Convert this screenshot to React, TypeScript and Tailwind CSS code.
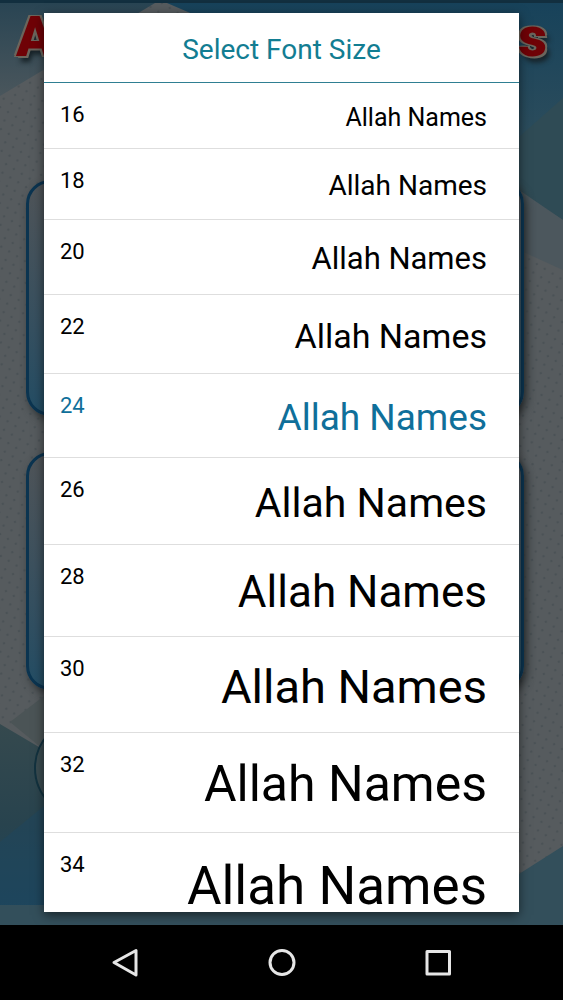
import { useState } from "react";
import clsx from "clsx";

interface FontOption {
  size: number;
  sample: string;
}

// sample = text size + line height of the preview on the right
const OPTIONS: FontOption[] = [
  { size: 16, sample: "text-[25px] leading-[33px]" },
  { size: 18, sample: "text-[28px] leading-[38px]" },
  { size: 20, sample: "text-[31px] leading-[42px]" },
  { size: 22, sample: "text-[34px] leading-[46px]" },
  { size: 24, sample: "text-[37px] leading-[51px]" },
  { size: 26, sample: "text-[41px] leading-[54px]" },
  { size: 28, sample: "text-[44px] leading-[59px]" },
  { size: 30, sample: "text-[47px] leading-[63px]" },
  { size: 32, sample: "text-[50px] leading-[67px]" },
  { size: 34, sample: "text-[53px] leading-[70px]" },
];

function Backdrop() {
  return (
    <div className="absolute inset-0 overflow-hidden bg-[#565b5e]" aria-hidden="true">
      <svg className="absolute inset-0 h-full w-full" viewBox="0 0 563 925" preserveAspectRatio="none">
        <defs>
          <linearGradient id="sky" x1="0" y1="0" x2="0" y2="1">
            <stop offset="0" stopColor="#17425a" />
            <stop offset="0.6" stopColor="#2b4c5c" />
            <stop offset="1" stopColor="#324d57" />
          </linearGradient>
          <linearGradient id="corner" x1="0" y1="0" x2="0" y2="1">
            <stop offset="0" stopColor="#35494e" />
            <stop offset="0.5" stopColor="#28434e" />
            <stop offset="1" stopColor="#1b465f" />
          </linearGradient>
          <linearGradient id="fade" x1="0" y1="0" x2="0" y2="1">
            <stop offset="0" stopColor="#284453" />
            <stop offset="1" stopColor="#4a565c" />
          </linearGradient>
          <pattern id="dots" width="12" height="14" patternUnits="userSpaceOnUse" patternTransform="rotate(-18)">
            <circle cx="3" cy="4" r="1.3" fill="#4b5256" />
            <circle cx="9" cy="11" r="1.3" fill="#4b5256" />
          </pattern>
        </defs>
        <rect width="563" height="925" fill="url(#dots)" />
        <path d="M0 0H160L0 96Z" fill="url(#fade)" />
        <path d="M160 0H563V220L519 192L300 60Z" fill="url(#sky)" />
        <path d="M519 137L563 98V220L519 192Z" fill="#2f4b55" />
        <path d="M519 190L563 220V270L519 250Z" fill="#4c575d" />
        <path d="M10 722L44 696V750Z" fill="#4b5456" />
        <path d="M0 724L44 750V925H0Z" fill="url(#corner)" />
        <path d="M0 842L44 806V925H0Z" fill="#1d465d" opacity="0.5" />
        <path d="M0 925V905H519V874L563 846V925Z" fill="#334f5b" />
        <rect width="563" height="3" fill="#122f3f" />
      </svg>
      <div className="relative flex h-[180px] justify-between px-4 pt-1 font-['Roboto',sans-serif] text-[56px] leading-[66px] font-black text-[#6f0206] [text-shadow:-2px_-1px_0_#6b655c,2px_-1px_0_#6b655c,-2px_1px_0_#6b655c,2px_2px_0_#6b655c,4px_6px_5px_#172227]">
        <span>A</span>
        <span>s</span>
      </div>
      <div className="relative flex flex-col gap-9 pr-[39px] pl-[26px]">
        <div className="h-[236px] rounded-3xl border-3 border-[#0b3450] bg-linear-to-b from-[#4f5458] to-[#234d64] shadow-[3px_4px_8px_#2b3032]" />
        <div className="h-[238px] rounded-3xl border-3 border-[#0b3450] bg-linear-to-b from-[#4f5458] to-[#234d64] shadow-[3px_4px_8px_#2b3032]" />
      </div>
      <div className="relative mr-12 ml-[34px] mt-7 h-[100px] rounded-full border-2 border-[#12323f] bg-[#3a4b50]" />
    </div>
  );
}

function NavBar() {
  return (
    <nav className="flex h-[75px] shrink-0 items-center justify-between bg-black px-[109px] text-[#e6e6e6]">
      <button type="button" aria-label="Back">
        <svg className="size-8" viewBox="0 0 32 32" fill="none" stroke="currentColor" strokeWidth="3" strokeLinejoin="round">
          <path d="M27 3.5V28L5 15.5Z" />
        </svg>
      </button>
      <button type="button" aria-label="Home">
        <svg className="size-8" viewBox="0 0 32 32" fill="none" stroke="currentColor" strokeWidth="3">
          <circle cx="16" cy="15.5" r="12" />
        </svg>
      </button>
      <button type="button" aria-label="Recent apps">
        <svg className="size-8" viewBox="0 0 32 32" fill="none" stroke="currentColor" strokeWidth="3" strokeLinejoin="round">
          <rect x="5" y="4.5" width="22.5" height="22.5" />
        </svg>
      </button>
    </nav>
  );
}

export default function App() {
  const [selected, setSelected] = useState(24);

  return (
    <div className="flex h-screen flex-col bg-black font-['Roboto',sans-serif]">
      <main className="relative flex min-h-0 flex-1 px-11 py-[13px]">
        <Backdrop />
        <section
          role="dialog"
          aria-labelledby="dialog-title"
          className="relative flex min-h-0 flex-1 flex-col bg-white shadow-[0_3px_10px_rgba(0,0,0,0.55)]"
        >
          <h1
            id="dialog-title"
            className="shrink-0 border-b border-[#2f7f92] pt-5 pb-4 text-center text-[28px] leading-[33px] text-[#127d92]"
          >
            Select Font Size
          </h1>
          <ul className="min-h-0 flex-1 overflow-y-auto [scrollbar-width:none]">
            {OPTIONS.map(({ size, sample }) => (
              <li key={size} className="border-b border-[#dedede]">
                <button
                  type="button"
                  onClick={() => setSelected(size)}
                  className={clsx(
                    "flex w-full items-start justify-between pt-4.5 pr-8 pb-3.5 pl-4",
                    size === selected ? "text-[#0f6f9a]" : "text-black"
                  )}
                >
                  <span className="text-[22px] leading-7">{size}</span>
                  <span className={sample}>Allah Names</span>
                </button>
              </li>
            ))}
          </ul>
        </section>
      </main>
      <NavBar />
    </div>
  );
}
